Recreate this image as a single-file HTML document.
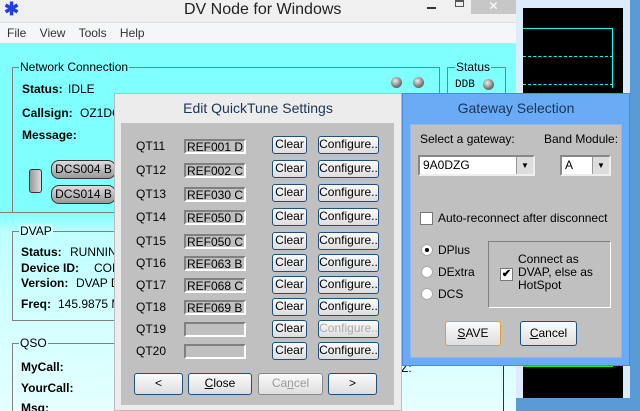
<!DOCTYPE html>
<html><head><style>
*{margin:0;padding:0;box-sizing:border-box}
html,body{width:640px;height:411px;overflow:hidden}
body{position:relative;background:#6fa8dc;font-family:"Liberation Sans",sans-serif;font-size:12px;color:#000}
.a{position:absolute;white-space:nowrap}
.b{font-weight:bold}
.btn{position:absolute;height:18px;border:1px solid #1f4f80;border-radius:3px;background:linear-gradient(#fbfbfb,#dedede);text-align:center;line-height:15px;font-size:12px;white-space:nowrap}
.tb{position:absolute;width:62px;height:15px;border:2px solid #808080;border-right-color:#fff;border-bottom-color:#fff;background:#c0c0c0;font-size:12px;line-height:12px;padding-left:1px;white-space:nowrap;overflow:hidden}
.lbl{position:absolute;left:136px;font-size:12px}
.led{position:absolute;width:11px;height:11px;border-radius:50%;background:radial-gradient(circle at 40% 35%,#eee,#777 60%,#444)}
.pill{position:absolute;height:19px;border:1px solid #333;border-radius:8px;background:linear-gradient(#ddd,#999);font-size:12px;text-align:center;line-height:17px}
.radio{position:absolute;width:12px;height:12px;border-radius:50%;background:#fff;border:1px solid #aaa}
</style></head><body>
<div class="a" style="left:516px;top:0;width:115px;height:411px;background:#dcecfc"></div>
<div class="a" style="left:630px;top:0;width:10px;height:411px;background:#5b9bd5"></div>
<div class="a" style="left:523px;top:8px;width:100px;height:390px;background:#000"></div>
<div class="a" style="left:523px;top:28px;width:90px;height:60px;border-top:1px solid #0ff;border-right:1px solid #0ff"></div>
<div class="a" style="left:523px;top:56px;width:90px;border-top:1px dashed #0ff"></div>
<div class="a" style="left:523px;top:84px;width:90px;border-top:1px dashed #0ff"></div>
<div class="a" style="left:523px;top:366px;width:90px;border-top:1px solid #0f0"></div>
<div class="a" style="left:516px;top:398px;width:115px;height:13px;background:#5b9bd5"></div>
<div class="a" style="left:0;top:0;width:516px;height:411px;background:#f0f0f0"></div>
<div class="a" style="left:4px;top:0;font-size:18px;color:#2040e0;font-weight:bold;line-height:18px">✱</div>
<div class="a" style="left:184px;top:1px;font-size:16px;color:#222">DV Node for Windows</div>
<div class="a" style="left:427px;top:7px;width:9px;height:2px;background:#333"></div>
<div class="a" style="left:455px;top:0;width:9px;height:7px;border:1px solid #555;border-top-width:2px"></div>
<div class="a" style="left:471px;top:0;width:45px;height:14px;background:#c7c7c7;color:#fff;text-align:center;font-size:12px;line-height:12px">✕</div>
<div class="a" style="left:0;top:22px;width:516px;height:21px;background:#f5f6f7;border-top:1px solid #ddd"></div>
<div class="a" style="left:7px;top:26px;font-size:12px;color:#333;word-spacing:10px">File View Tools Help</div>
<div class="a" style="left:0;top:43px;width:516px;height:368px;background:linear-gradient(#80ffff 0,#80ffff 170px,#c0ffff 190px,#e6ffff 368px)"></div>
<div class="a" style="left:12px;top:67px;width:428px;height:146px;border:1px solid #808080;border-bottom:none"></div>
<div class="a" style="left:19px;top:60px;background:#80ffff;padding:0 1px;font-size:12px">Network Connection</div>
<div class="a" style="left:0;top:212px;width:430px;border-top:1px solid #808080"></div>
<div class="a b" style="left:22px;top:82px">Status:</div><div class="a" style="left:68px;top:82px">IDLE</div>
<div class="a b" style="left:22px;top:106px">Callsign:</div><div class="a" style="left:80px;top:106px">OZ1DG</div>
<div class="a b" style="left:22px;top:128px">Message:</div>
<div class="a" style="left:29px;top:169px;width:13px;height:24px;border:1px solid #333;border-radius:3px;background:linear-gradient(90deg,#999,#ddd)"></div>
<div class="pill" style="left:51px;top:160px;width:65px">DCS004 B</div>
<div class="pill" style="left:51px;top:185px;width:65px">DCS014 B</div>
<div class="led" style="left:391px;top:77px"></div><div class="led" style="left:413px;top:77px"></div>
<div class="a" style="left:447px;top:67px;width:59px;height:30px;border:1px solid #808080;border-bottom:none"></div>
<div class="a" style="left:455px;top:60px;background:#80ffff;padding:0 1px">Status</div>
<div class="a" style="left:455px;top:79px;font-family:'Liberation Mono',monospace;font-size:11px">DDB</div>
<div class="led" style="left:483px;top:79px"></div>
<div class="a" style="left:12px;top:231px;width:110px;height:90px;border:1px solid #808080;border-right:none"></div>
<div class="a" style="left:19px;top:224px;background:#c8ffff;padding:0 1px">DVAP</div>
<div class="a b" style="left:21px;top:245px">Status:</div><div class="a" style="left:70px;top:245px">RUNNIN</div>
<div class="a b" style="left:21px;top:261px">Device ID:</div><div class="a" style="left:94px;top:261px">COM</div>
<div class="a b" style="left:21px;top:276px">Version:</div><div class="a" style="left:76px;top:276px">DVAP D</div>
<div class="a b" style="left:21px;top:297px">Freq:</div><div class="a" style="left:58px;top:297px">145.9875 M</div>
<div class="a" style="left:12px;top:343px;width:110px;height:80px;border:1px solid #808080;border-right:none"></div>
<div class="a" style="left:19px;top:336px;background:#d8ffff;padding:0 1px">QSO</div>
<div class="a b" style="left:21px;top:360px">MyCall:</div>
<div class="a b" style="left:21px;top:381px">YourCall:</div>
<div class="a b" style="left:21px;top:401px">Msg:</div>
<div class="a" style="left:401px;top:361px;font-size:12px">Z:</div>
<div class="a" style="left:503px;top:360px;width:1px;height:51px;background:#333"></div>
<div class="a" style="left:114px;top:93px;width:288px;height:318px;background:#ececec;border:1px solid #bbb"></div>
<div class="a" style="left:114px;top:100px;width:288px;text-align:center;font-size:14px;color:#1c3458">Edit QuickTune Settings</div>
<div class="a" style="left:121px;top:123px;width:273px;height:282px;background:#c0c0c0"></div>
<div class="lbl" style="top:139px">QT11</div><div class="tb" style="left:184px;top:139px">REF001 D</div>
<div class="lbl" style="top:163px">QT12</div><div class="tb" style="left:184px;top:163px">REF002 C</div>
<div class="lbl" style="top:187px">QT13</div><div class="tb" style="left:184px;top:187px">REF030 C</div>
<div class="lbl" style="top:210px">QT14</div><div class="tb" style="left:184px;top:210px">REF050 D</div>
<div class="lbl" style="top:234px">QT15</div><div class="tb" style="left:184px;top:234px">REF050 C</div>
<div class="lbl" style="top:256px">QT16</div><div class="tb" style="left:184px;top:256px">REF063 B</div>
<div class="lbl" style="top:278px">QT17</div><div class="tb" style="left:184px;top:278px">REF068 C</div>
<div class="lbl" style="top:300px">QT18</div><div class="tb" style="left:184px;top:300px">REF069 B</div>
<div class="lbl" style="top:322px">QT19</div><div class="tb" style="left:184px;top:322px"></div>
<div class="lbl" style="top:344px">QT20</div><div class="tb" style="left:184px;top:344px"></div>
<div class="btn" style="left:272px;top:136px;width:35px">Clear</div><div class="btn" style="left:318px;top:136px;width:61px">Configure..</div>
<div class="btn" style="left:272px;top:160px;width:35px">Clear</div><div class="btn" style="left:318px;top:160px;width:61px">Configure..</div>
<div class="btn" style="left:272px;top:184px;width:35px">Clear</div><div class="btn" style="left:318px;top:184px;width:61px">Configure..</div>
<div class="btn" style="left:272px;top:208px;width:35px">Clear</div><div class="btn" style="left:318px;top:208px;width:61px">Configure..</div>
<div class="btn" style="left:272px;top:232px;width:35px">Clear</div><div class="btn" style="left:318px;top:232px;width:61px">Configure..</div>
<div class="btn" style="left:272px;top:254px;width:35px">Clear</div><div class="btn" style="left:318px;top:254px;width:61px">Configure..</div>
<div class="btn" style="left:272px;top:276px;width:35px">Clear</div><div class="btn" style="left:318px;top:276px;width:61px">Configure..</div>
<div class="btn" style="left:272px;top:298px;width:35px">Clear</div><div class="btn" style="left:318px;top:298px;width:61px">Configure..</div>
<div class="btn" style="left:272px;top:320px;width:35px">Clear</div><div class="btn" style="left:318px;top:320px;width:61px;color:#aaa">Configure..</div>
<div class="btn" style="left:272px;top:342px;width:35px">Clear</div><div class="btn" style="left:318px;top:342px;width:61px">Configure..</div>
<div class="btn" style="left:134px;top:373px;width:49px;height:22px;line-height:19px">&lt;</div>
<div class="btn" style="left:188px;top:373px;width:64px;height:22px;line-height:19px"><u>C</u>lose</div>
<div class="btn" style="left:258px;top:373px;width:65px;height:22px;line-height:19px;color:#999;border-color:#888">Ca<u>n</u>cel</div>
<div class="btn" style="left:328px;top:373px;width:49px;height:22px;line-height:19px">&gt;</div>
<div class="a" style="left:402px;top:93px;width:228px;height:273px;background:#6aabf5;border:1px solid #4a8ad8"></div>
<div class="a" style="left:402px;top:100px;width:228px;text-align:center;font-size:14px;color:#1c3458">Gateway Selection</div>
<div class="a" style="left:410px;top:124px;width:212px;height:234px;background:#c0c0c0;border:1px solid #8fb8ea"></div>
<div class="a" style="left:420px;top:132px">Select a gateway:</div>
<div class="a" style="left:544px;top:132px">Band Module:</div>
<div class="a" style="left:418px;top:155px;width:117px;height:21px;background:#fff;border:2px solid #888;border-right-color:#eee;border-bottom-color:#eee;padding-left:3px;line-height:16px">9A0DZG</div>
<div class="a" style="left:516px;top:157px;width:17px;height:17px;background:#ddd;border-left:1px solid #999;font-size:8px;text-align:center;line-height:17px">▼</div>
<div class="a" style="left:560px;top:155px;width:51px;height:21px;background:#fff;border:2px solid #888;border-right-color:#eee;border-bottom-color:#eee;padding-left:3px;line-height:16px">A</div>
<div class="a" style="left:592px;top:157px;width:17px;height:17px;background:#ddd;border-left:1px solid #999;font-size:8px;text-align:center;line-height:17px">▼</div>
<div class="a" style="left:420px;top:212px;width:13px;height:13px;background:#fff;border:1px solid #777"></div>
<div class="a" style="left:438px;top:211px">Auto-reconnect after disconnect</div>
<div class="radio" style="left:421px;top:244px"><div class="a" style="left:3px;top:3px;width:4px;height:4px;border-radius:50%;background:#000"></div></div>
<div class="radio" style="left:421px;top:266px"></div>
<div class="radio" style="left:421px;top:288px"></div>
<div class="a" style="left:438px;top:243px">DPlus</div>
<div class="a" style="left:438px;top:265px">DExtra</div>
<div class="a" style="left:438px;top:287px">DCS</div>
<div class="a" style="left:488px;top:241px;width:123px;height:67px;border:1px solid #808080;border-right-color:#fff;border-bottom-color:#fff"></div>
<div class="a" style="left:500px;top:268px;width:13px;height:13px;background:#fff;border:1px solid #777;font-size:11px;line-height:11px;text-align:center;font-weight:bold">✔</div>
<div class="a" style="left:518px;top:253px;line-height:13px">Connect as<br>DVAP, else as<br>HotSpot</div>
<div class="btn" style="left:445px;top:321px;width:56px;height:25px;line-height:22px;border-color:#e0a030"><u>S</u>AVE</div>
<div class="btn" style="left:520px;top:321px;width:57px;height:25px;line-height:22px"><u>C</u>ancel</div>
</body></html>
